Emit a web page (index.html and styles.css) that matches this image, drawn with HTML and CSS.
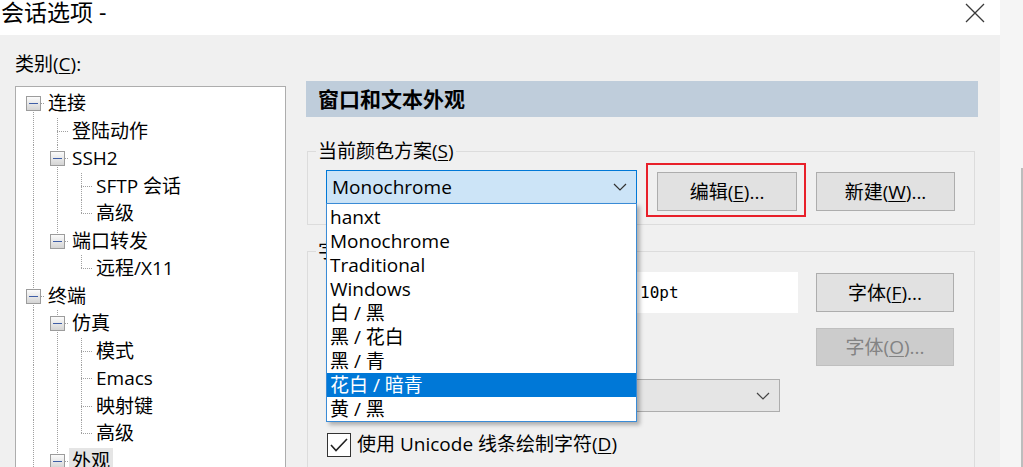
FILE: index.html
```html
<!DOCTYPE html>
<html lang="zh-CN">
<head>
<meta charset="utf-8">
<title>会话选项</title>
<link rel="stylesheet" href="styles.css">
</head>
<body>
<div class="screen">
  <div class="dialog">
    <div class="titlebar">
      <span class="title">会话选项 -</span>
      <svg class="close" width="20" height="20" viewBox="0 0 20 20"><path d="M1 1L19 19M19 1L1 19" stroke="#3a3a3a" stroke-width="1.3" fill="none"/></svg>
    </div>
    <div class="body">
      <div class="left">
        <div class="cat-label">类别(<u>C</u>):</div>
        <div class="tree">
          <div class="row"><span class="slot f"><span class="box"></span></span><span class="txt">连接</span></div>
          <div class="row"><span class="slot v"></span><span class="slot t"></span><span class="txt">登陆动作</span></div>
          <div class="row"><span class="slot v"></span><span class="slot t"><span class="box"></span></span><span class="txt">SSH2</span></div>
          <div class="row"><span class="slot v"></span><span class="slot v"></span><span class="slot t"></span><span class="txt">SFTP 会话</span></div>
          <div class="row"><span class="slot v"></span><span class="slot v"></span><span class="slot l"></span><span class="txt">高级</span></div>
          <div class="row"><span class="slot v"></span><span class="slot l"><span class="box"></span></span><span class="txt">端口转发</span></div>
          <div class="row"><span class="slot v"></span><span class="slot"></span><span class="slot l"></span><span class="txt">远程/X11</span></div>
          <div class="row"><span class="slot t"><span class="box"></span></span><span class="txt">终端</span></div>
          <div class="row"><span class="slot v"></span><span class="slot t"><span class="box"></span></span><span class="txt">仿真</span></div>
          <div class="row"><span class="slot v"></span><span class="slot v"></span><span class="slot t"></span><span class="txt">模式</span></div>
          <div class="row"><span class="slot v"></span><span class="slot v"></span><span class="slot t"></span><span class="txt">Emacs</span></div>
          <div class="row"><span class="slot v"></span><span class="slot v"></span><span class="slot t"></span><span class="txt">映射键</span></div>
          <div class="row"><span class="slot v"></span><span class="slot v"></span><span class="slot l"></span><span class="txt">高级</span></div>
          <div class="row"><span class="slot v"></span><span class="slot t"><span class="box"></span></span><span class="txt sel">外观</span></div>
        </div>
      </div>
      <div class="right">
        <div class="header">窗口和文本外观</div>
        <fieldset class="group g1">
          <legend>当前颜色方案(<u>S</u>)</legend>
          <div class="scheme-row">
            <div class="combo-wrap">
              <div class="combo active"><span>Monochrome</span><svg width="14" height="8" viewBox="0 0 14 8"><path d="M1 1L7 7L13 1" stroke="#333" stroke-width="1.2" fill="none"/></svg></div>
              <ul class="droplist">
                <li>hanxt</li>
                <li>Monochrome</li>
                <li>Traditional</li>
                <li>Windows</li>
                <li>白 / 黑</li>
                <li>黑 / 花白</li>
                <li>黑 / 青</li>
                <li class="sel">花白 / 暗青</li>
                <li>黄 / 黑</li>
              </ul>
            </div>
            <div class="highlight"><div class="btn">编辑(<u>E</u>)...</div></div>
            <div class="btn new">新建(<u>W</u>)...</div>
          </div>
        </fieldset>
        <fieldset class="group g2">
          <legend>字体</legend>
          <div class="font-area">
            <div class="font-row">
              <div class="textbox"><span class="mono">10pt</span></div>
              <div class="btn">字体(<u>F</u>)...</div>
            </div>
            <div class="font-row2">
              <div class="btn disabled">字体(<u>O</u>)...</div>
            </div>
            <div class="combo grey"><span></span><svg width="14" height="8" viewBox="0 0 14 8"><path d="M1 1L7 7L13 1" stroke="#444" stroke-width="1.2" fill="none"/></svg></div>
            <div class="check-row">
              <span class="checkbox"><svg width="22" height="22" viewBox="0 0 22 22"><path d="M3 11L8 16.5L19 5" stroke="#222" stroke-width="1.6" fill="none"/></svg></span>
              <span class="check-label">使用 Unicode 线条绘制字符(<u>D</u>)</span>
            </div>
          </div>
        </fieldset>
      </div>
    </div>
  </div>
  <div class="strip"><div class="edge"></div></div>
</div>
</body>
</html>
```
FILE: styles.css
```css
* { box-sizing: border-box; }
html, body { margin: 0; padding: 0; }
body {
  font-family: "Open Sans", "Noto Sans CJK SC", sans-serif;
  font-size: 19px;
  color: #000;
  background: #f5f5f5;
}
u { text-underline-offset: 2px; text-decoration-thickness: 1px; }

.screen { width: 1023px; height: 467px; overflow: hidden; display: flex; }
.dialog { width: 1000px; flex: none; display: flex; flex-direction: column; background: #f0f0f0; }

.titlebar {
  height: 35px; flex: none; background: #fff;
  display: flex; justify-content: space-between; align-items: flex-start;
  padding: 0 15px 0 1px;
}
.title { font-size: 23px; line-height: 25px; }
.close { margin-top: 3px; }

.body { flex: 1; min-height: 0; display: flex; }

.left { width: 306px; flex: none; padding: 17px 0 0 15px; display: flex; flex-direction: column; }
.cat-label { height: 24px; line-height: 24px; margin-bottom: 10px; }
.tree {
  width: 271px; flex: 1; background: #fff;
  border: 1px solid #adadad; border-bottom: none;
  padding: 3px 0 0 5px;
}
.row { display: flex; height: 27.5px; }
.slot { width: 24px; flex: none; display: flex; align-items: center; justify-content: center; }
.v {
  background: repeating-linear-gradient(to bottom, #a0a0a0 0 1px, transparent 1px 2px) 12px 0 / 1px 100% no-repeat;
}
.t {
  background:
    repeating-linear-gradient(to right, #a0a0a0 0 1px, transparent 1px 2px) 12px 50% / 12px 1px no-repeat,
    repeating-linear-gradient(to bottom, #a0a0a0 0 1px, transparent 1px 2px) 12px 0 / 1px 100% no-repeat;
}
.l {
  background:
    repeating-linear-gradient(to right, #a0a0a0 0 1px, transparent 1px 2px) 12px 50% / 12px 1px no-repeat,
    repeating-linear-gradient(to bottom, #a0a0a0 0 1px, transparent 1px 2px) 12px 0 / 1px 50% no-repeat;
}
.f {
  background:
    repeating-linear-gradient(to right, #a0a0a0 0 1px, transparent 1px 2px) 12px 50% / 12px 1px no-repeat,
    repeating-linear-gradient(to bottom, #a0a0a0 0 1px, transparent 1px 2px) 12px 100% / 1px 50% no-repeat;
}
.box {
  width: 15px; height: 15px; border: 1px solid #9c9c9c;
  background: linear-gradient(#fbfbfb, #d4d4d4);
  display: flex; align-items: center; justify-content: center;
}
.box::before { content: ""; width: 9px; height: 1px; background: #3f5ea6; }
.txt { padding: 0 3px; line-height: 27.5px; white-space: nowrap; }
.txt.sel { background: #e5e5e5; }

.right { flex: 1; padding-top: 46px; display: flex; flex-direction: column; }
.header {
  width: 672px; height: 36px; background: #bfcddb;
  font-size: 21px; font-weight: bold; line-height: 36px; padding-left: 12px;
}

.group {
  width: 668px; min-width: 0; margin: 0 0 0 1px; padding: 0;
  border: 1px solid #dcdcdc;
}
.group legend { margin-left: 8px; padding: 0 2px; line-height: 20px; }
.g1 { margin-top: 24px; }
.g2 { margin-top: 16px; flex: 1; border-bottom: none; }

.scheme-row { display: flex; align-items: flex-start; padding: 2px 0 7px 18px; }
.combo-wrap { position: relative; margin-top: 7px; width: 311px; }
.combo {
  height: 34px; display: flex; align-items: center; justify-content: space-between;
  padding: 0 9px 0 5px;
}
.combo.active { border: 1px solid #0078d7; background: #cce4f7; }
.combo.grey { width: 454px; height: 33px; margin-top: 13px; border: 1px solid #adadad; background: #e5e5e5; }

.droplist {
  position: absolute; left: 0; top: 33px; z-index: 2;
  width: 311px; margin: 0; padding: 1px 0 0; list-style: none;
  background: #fff; border: 1px solid #3a8bd6;
  box-shadow: 3px 3px 4px rgba(0, 0, 0, 0.28);
}
.droplist li { height: 24px; line-height: 24px; padding-left: 3px; white-space: nowrap; }
.droplist li.sel { background: #0078d7; color: #fff; }

.btn {
  width: 140px; height: 39px; flex: none;
  background: #e1e1e1; border: 1px solid #adadad;
  display: flex; align-items: center; justify-content: center;
  line-height: 24px; white-space: nowrap;
}
.highlight { margin-left: 9px; border: 2px solid #e8202a; padding: 7px 7px 4px 9px; }
.btn.new { width: 139px; margin-left: 10px; margin-top: 9px; }

.font-area { padding: 11px 0 0 18px; }
.font-row { display: flex; align-items: center; }
.textbox {
  width: 472px; height: 41px; background: #fff;
  display: flex; align-items: center; padding-left: 314px;
}
.mono { font-family: "DejaVu Sans Mono", monospace; font-size: 16px; }
.font-row .btn { width: 138px; margin-left: 18px; }
.font-row2 { margin-top: 15px; padding-left: 490px; }
.btn.disabled { width: 138px; height: 38px; background: #cccccc; border-color: #bfbfbf; color: #838383; }

.check-row { margin-top: 20px; display: flex; align-items: center; }
.checkbox {
  width: 24px; height: 24px; margin-left: 1px; flex: none;
  border: 1px solid #333; background: #fff;
  display: flex; align-items: center; justify-content: center;
}
.check-label { margin-left: 6px; line-height: 25px; white-space: nowrap; }

.strip { width: 23px; flex: none; background: #f5f5f5; display: flex; }
.edge { margin: 168px 0 0 21px; width: 2px; background: #bdbdbd; }
```
